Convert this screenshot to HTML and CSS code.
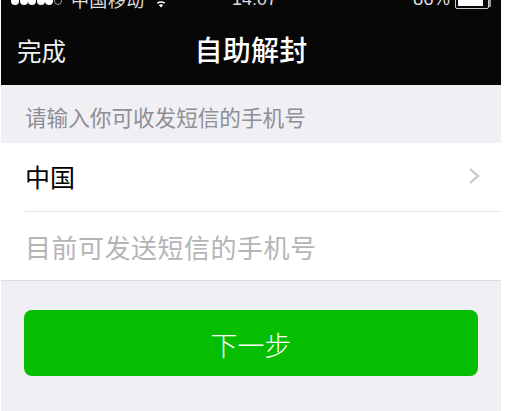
FILE: index.html
```html
<!DOCTYPE html>
<html lang="zh">
<head>
<meta charset="utf-8">
<title>自助解封</title>
<link rel="stylesheet" href="styles.css">
</head>
<body>
<main class="screen">
  <header class="top">
    <div class="status">
      <div class="status-left">
        <span class="signal">
          <i class="dot"></i><i class="dot"></i><i class="dot"></i><i class="dot"></i><i class="dot"></i><i class="dot empty"></i>
        </span>
        <span class="carrier">中国移动</span>
        <svg class="wifi" width="14" height="9" viewBox="0 0 14 9"><path d="M7 8.500 L4.800 6 Q7 4.600 9.200 6 Z M3.800 4.800 Q7 2.600 10.200 4.800 L11.200 3.600 Q7 .8 2.800 3.600 Z" fill="#fff"/></svg>
      </div>
      <span class="time">14:07</span>
      <div class="status-right">
        <span class="pct">86%</span>
        <span class="battery"><span class="level"></span></span>
        <span class="nub"></span>
      </div>
    </div>
    <div class="nav">
      <span class="done">完成</span>
      <h1 class="title">自助解封</h1>
    </div>
  </header>
  <p class="hint">请输入你可收发短信的手机号</p>
  <section class="group">
    <div class="row region">
      <span>中国</span>
      <svg class="chev" width="13" height="18" viewBox="0 0 13 18"><path d="M2 2 L10 9 L2 16" fill="none" stroke="#c8c8cc" stroke-width="2.200"/></svg>
    </div>
    <div class="row phone">目前可发送短信的手机号</div>
  </section>
  <button class="next">下一步</button>
</main>
</body>
</html>
```
FILE: styles.css
```css
* { box-sizing: border-box; }
html, body { margin: 0; padding: 0; background: #fff; }
body { width: 505px; height: 411px; overflow: hidden; font-family: "Noto Sans CJK SC", "Liberation Sans", sans-serif; }
.screen { margin-left: 1px; width: 500px; height: 411px; background: #efeff4; display: flex; flex-direction: column; }
.top { background: #070707; height: 85px; color: #fff; }
.status { height: 10px; overflow: hidden; display: grid; grid-template-columns: 1fr auto 1fr; grid-template-rows: 10px; align-items: end; padding: 0 10px 0 10px; }
.status-left, .status-right { display: flex; align-items: flex-end; }
.status-right { justify-content: flex-end; }
.signal { display: flex; gap: .6px; margin-right: 9px; margin-bottom: 5px; }
.dot { width: 8px; height: 8px; border-radius: 50%; background: #fff; display: block; }
.dot.empty { background: none; border: 1px solid #999; }
.carrier { font-size: 18px; line-height: 22px; color: #ddd; letter-spacing: .4px; flex: none; }
.wifi { margin-left: 9px; margin-bottom: 2px; flex: none; }
.time { font-family: "Liberation Sans", sans-serif; font-size: 18px; line-height: 22px; color: #ddd; margin-left: 7px; }
.pct { font-family: "Liberation Sans", sans-serif; font-size: 18.500px; line-height: 22px; color: #ddd; flex: none; }
.battery { width: 34px; height: 18px; margin-left: 5px; margin-bottom: 1px; border: 1px solid #ccc; padding: 2px; border-radius: 2px; display: block; flex: none; }
.level { display: block; height: 100%; width: 90%; background: #fff; }
.nub { width: 2px; height: 7px; margin-bottom: 3px; background: #999; flex: none; }
.nav { height: 75px; display: grid; grid-template-columns: 1fr auto 1fr; align-items: center; padding-top: 3px; }
.done { font-size: 24.500px; line-height: 34px; color: #f2f2f2; padding: 4px 0 0 16px; }
.title { margin: 0; font-size: 28px; font-weight: 500; line-height: 40px; letter-spacing: .2px; }
.hint { margin: 0; height: 58px; padding: 18px 0 0 24px; font-size: 21.600px; line-height: 28px; color: #8e8e93; }
.group { background: #fff; border-bottom: 1px solid #dcdce0; }
.row { display: flex; align-items: center; margin-left: 24px; height: 68px; }
.region { height: 69px; border-bottom: 1px solid #e5e5e8; justify-content: space-between; padding-right: 20px; font-size: 25px; color: #000; padding-bottom: 2px; }
.phone { font-size: 26px; letter-spacing: .5px; color: #b5b5b8; }
.next { display: block; margin: 29px 0 0 23px; width: 454px; height: 66px; border: 0; border-radius: 8px; background: #05be02; color: #fff; font: 300 27px "Noto Sans CJK SC", sans-serif; padding: 2px 0 0 0; }
.chev { flex: none; }
```
